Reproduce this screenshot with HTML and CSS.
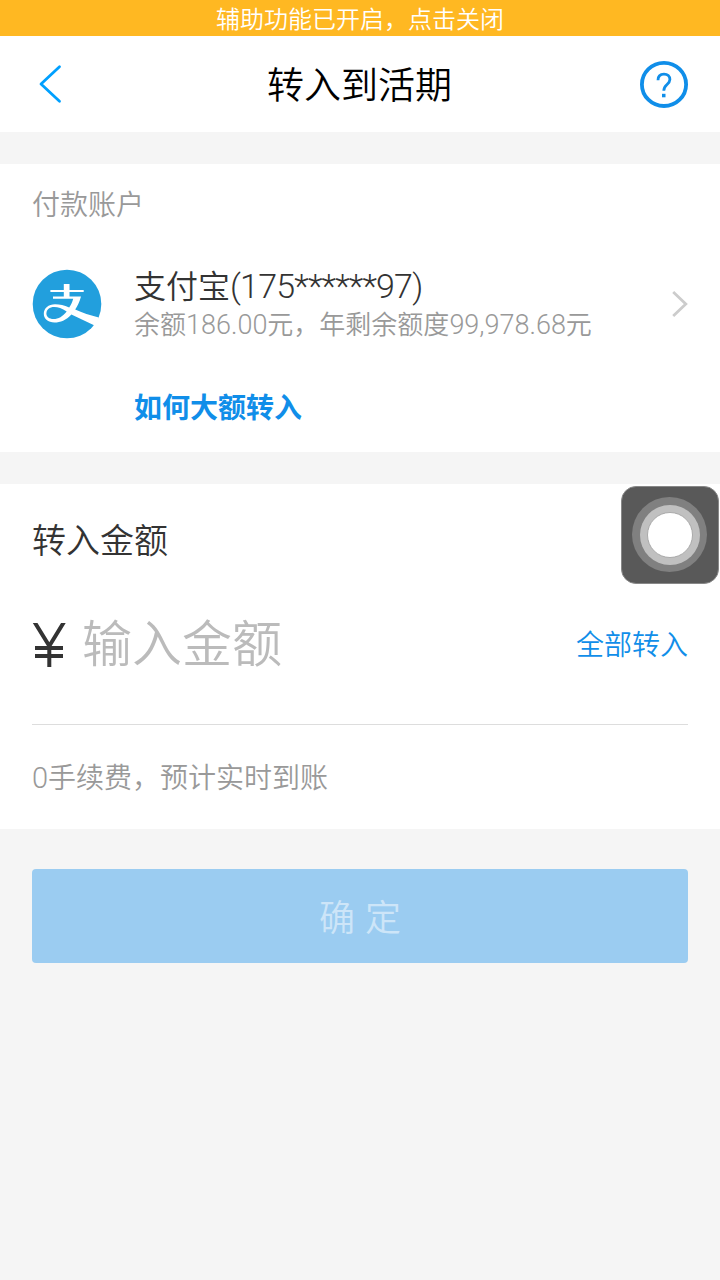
FILE: index.html
```
<!DOCTYPE html>
<html lang="zh-CN">
<head>
    <meta charset="UTF-8">
    <meta name="viewport" content="width=device-width, initial-scale=1.0">
    <title>转入到活期</title>
    <link rel="stylesheet" href="styles.css">
</head>
<body>
    <div class="notice">辅助功能已开启，点击关闭</div>

    <header class="header">
        <a class="back">
            <svg width="24" height="40" viewBox="0 0 24 40">
                <path d="M21.5 2.8 L3 20 L21.5 37.2" fill="none" stroke="#00a0ff" stroke-width="2.8" stroke-linecap="round" stroke-linejoin="round"/>
            </svg>
        </a>
        <h1>转入到活期</h1>
        <a class="help">
            <svg width="48" height="48" viewBox="0 0 48 48">
                <ellipse cx="24" cy="24.4" rx="22.1" ry="21.6" fill="none" stroke="#108ee9" stroke-width="3.8"/>
                <path d="M18 20.2 C18 16.2 20.4 14.1 24 14.1 C27.6 14.1 29.9 16.3 29.9 19.6 C29.9 22 28.6 23.2 26.8 24.8 C24.6 26.8 23.8 27.8 23.8 30.8" fill="none" stroke="#108ee9" stroke-width="2.8"/>
                <rect x="22" y="33.8" width="3.5" height="3.5" fill="#108ee9"/>
            </svg>
        </a>
    </header>

    <section class="card account">
        <div class="label">付款账户</div>
        <div class="account-row">
            <svg class="logo" width="70" height="70" viewBox="0 0 70 70">
                <circle cx="35" cy="35" r="34.3" fill="#229fdd"/>
                <path d="M31.8 15 H37.5 V20.9 H51.7 V23.1 H37.5 V27.6 H49 C47.4 33.5 45.6 37 43.2 40.6 C50 43.8 58.5 46.6 66.8 48.6 C66 51.7 64.5 54.4 62.6 56.6 L39.4 45.4 C34 51.2 28.5 53.4 22.5 53.4 C16 53.4 11.8 50.2 11.8 44.8 C11.8 39 16.5 35.2 23 35.2 C28 35.2 32 36.4 37.2 38.4 C39 36 40.2 33.5 41.2 29.8 H21 V27.6 H31.8 V23.1 H18.4 V20.9 H31.8 Z" fill="#fff"/>
                <path d="M34.7 42.4 C30 39.4 26 38 22.3 38 C17.5 38 14.4 40.6 14.4 44.5 C14.4 47.8 17.2 50 21.5 50 C26.5 50 30.6 47.4 34.7 42.4 Z" fill="#229fdd"/>
            </svg>
            <div class="account-info">
                <div class="account-name">支付宝<span class="num">(175******97)</span></div>
                <div class="account-balance">余额<span class="num">186.00</span>元，年剩余额度<span class="num">99,978.68</span>元</div>
            </div>
            <svg class="arrow" width="16" height="28" viewBox="0 0 16 28">
                <path d="M1.2 2 L13.8 14 L1.2 26" fill="none" stroke="#ccc" stroke-width="2.8"/>
            </svg>
        </div>
        <a class="link">如何大额转入</a>
    </section>

    <section class="card amount">
        <div class="amount-title">转入金额</div>
        <div class="amount-row">
            <svg class="yen" width="34" height="44" viewBox="0 0 34 44">
                <path d="M2.5 -1 L17.3 23 L32 -1 M17.3 22 V44 M3 25 H31 M3 33 H31" fill="none" stroke="#333" stroke-width="4"/>
            </svg>
            <span class="placeholder">输入金额</span>
            <a class="all">全部转入</a>
        </div>
        <div class="tip"><span class="num">0</span>手续费，预计实时到账</div>
    </section>

    <button class="submit">确 定</button>

    <!-- 悬浮辅助按钮 -->
    <div class="touch">
        <div class="touch-outer">
            <div class="touch-middle">
                <div class="touch-inner"></div>
            </div>
        </div>
    </div>
</body>
</html>
```
FILE: styles.css
```
* {
    box-sizing: border-box;
}
body {
    margin: 0;
    min-height: 1280px;
    background: #f5f5f5;
    font-family: "Noto Sans CJK SC", sans-serif;
    font-weight: 350;
    color: #333;
}
.num {
    font-family: Roboto, "Noto Sans CJK SC", sans-serif;
    font-weight: 300;
    line-height: 1;
}
.notice {
    height: 36px;
    line-height: 36px;
    background: #ffb822;
    color: #fff;
    font-size: 24px;
    text-align: center;
}
.header {
    display: flex;
    align-items: center;
    justify-content: space-between;
    height: 96px;
    padding: 0 32px;
    background: #fff;
}
.header h1 {
    margin: 0 1px 2px 0;
    font-size: 37px;
    line-height: 48px;
    font-weight: 350;
    color: #000;
}
.back {
    display: flex;
    width: 48px;
    padding-left: 6px;
}
.help {
    display: flex;
}
.card {
    margin-top: 32px;
    padding: 0 32px;
    background: #fff;
}
.account {
    height: 288px;
}
.label {
    padding-top: 19px;
    font-size: 28px;
    line-height: 40px;
    color: #999;
}
.account-row {
    display: flex;
    align-items: center;
    height: 76px;
    margin-top: 43px;
}
.account-info {
    flex: 1;
    margin-left: 32px;
    padding-bottom: 2px;
}
.account-name {
    font-size: 32px;
    line-height: 38px;
    color: #333;
}
.account-name .num {
    font-size: 34px;
    letter-spacing: -0.8px;
}
.account-balance {
    font-size: 26px;
    line-height: 39px;
    color: #999;
}
.account-balance .num {
    font-size: 27px;
}
.link {
    display: block;
    margin: 44px 0 0 102px;
    font-size: 28px;
    line-height: 40px;
    font-weight: 700;
    color: #108ee9;
}
.amount {
    height: 345px;
}
.amount-title {
    padding-top: 32px;
    font-size: 34px;
    line-height: 46px;
}
.amount-row {
    display: flex;
    align-items: center;
    height: 163px;
    border-bottom: 1px solid #ddd;
}
.yen {
    margin-top: 3px;
}
.placeholder {
    flex: 1;
    margin: 0 0 6px 16px;
    font-size: 50px;
    line-height: 60px;
    color: #bbb;
}
.all {
    font-size: 28px;
    color: #108ee9;
}
.tip {
    padding-top: 31px;
    font-size: 28px;
    line-height: 40px;
    color: #999;
}
.tip .num {
    font-size: 29px;
}
.submit {
    display: block;
    width: 656px;
    height: 94px;
    margin: 40px auto 0;
    padding: 0 0 3px;
    border: none;
    border-radius: 4px;
    background: #9bccf1;
    color: #cde5f8;
    font-family: inherit;
    font-size: 36px;
    font-weight: 350;
    word-spacing: 2px;
}
.touch {
    position: absolute;
    top: 486px;
    right: 1px;
    display: flex;
    align-items: center;
    justify-content: center;
    width: 98px;
    height: 98px;
    padding: 0 1px 1px 0;
    border: 1px solid #888;
    border-radius: 15px;
    background: #595959;
}
.touch-outer,
.touch-middle,
.touch-inner {
    display: flex;
    align-items: center;
    justify-content: center;
    border-radius: 50%;
}
.touch-outer {
    width: 75px;
    height: 75px;
    background: #808080;
}
.touch-middle {
    width: 60px;
    height: 60px;
    background: #c0c0c0;
}
.touch-inner {
    width: 46px;
    height: 46px;
    border: 1px solid #aaa;
    background: #fff;
}
```
